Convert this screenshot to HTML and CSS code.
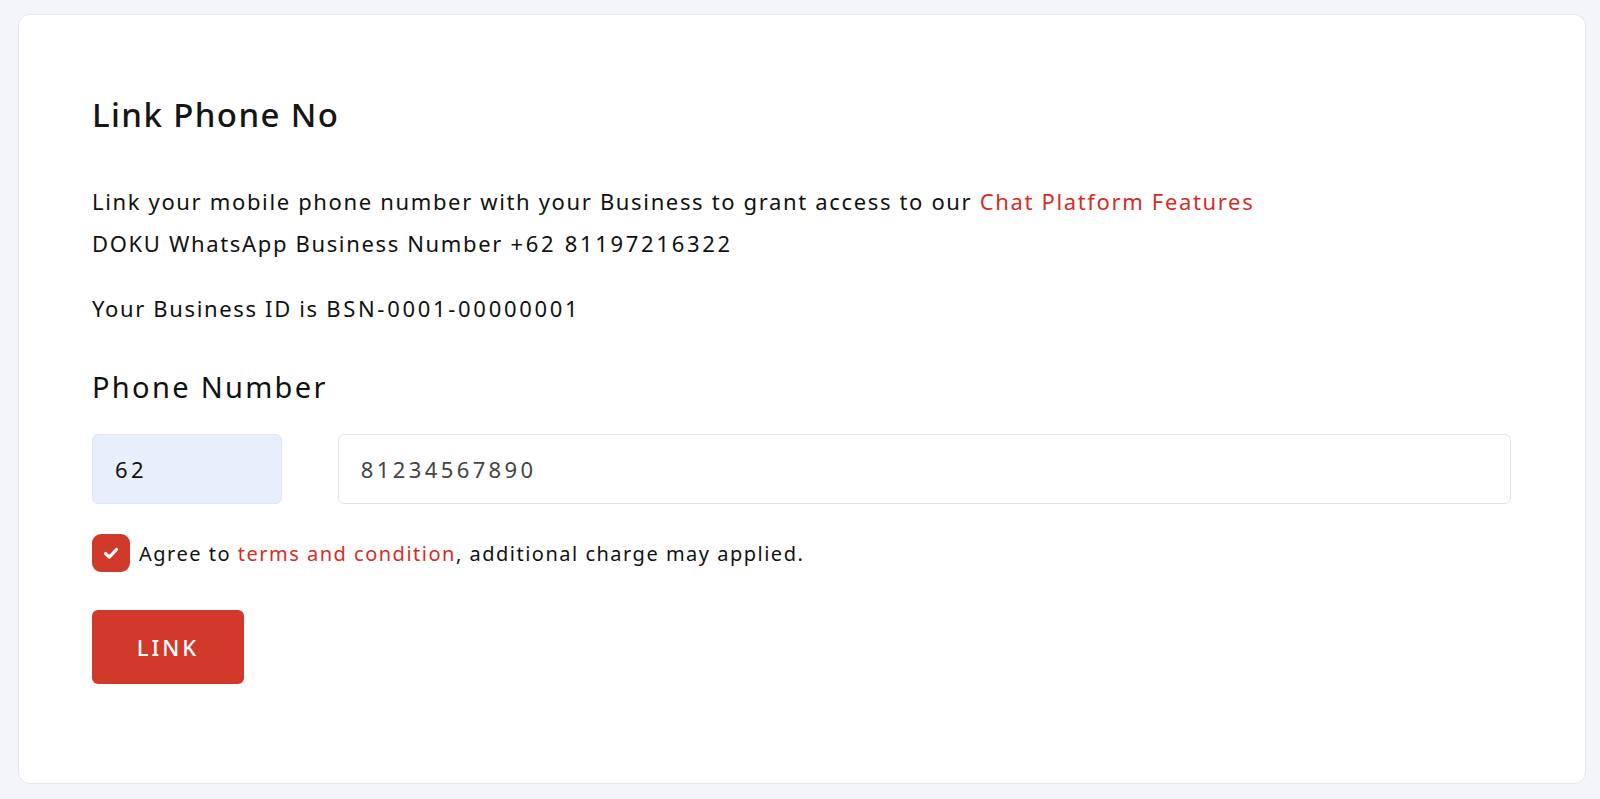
FILE: index.html
```html
<!DOCTYPE html>
<html>
<head>
<meta charset="utf-8">
<link rel="stylesheet" href="styles.css">
</head>
<body>
<div class="page">
  <div class="card">
    <h1 class="title">Link Phone No</h1>
    <p class="desc">Link your mobile phone number with your Business to grant access to our <span class="red">Chat Platform Features</span><br>DOKU WhatsApp Business Number <span class="num">+62 81197216322</span></p>
    <p class="bizid">Your Business ID is <span class="num">BSN-0001-00000001</span></p>
    <h2 class="label">Phone Number</h2>
    <div class="phone-row">
      <div class="prefix">62</div>
      <div class="number">81234567890</div>
    </div>
    <div class="agree">
      <span class="check"><svg width="22" height="22" viewBox="0 0 22 22"><path d="M5.5 11.5l3.8 3.6L16.5 7.5" fill="none" stroke="#fff" stroke-width="3.2" stroke-linecap="round" stroke-linejoin="round"/></svg></span>
      <span class="agree-text">Agree to <span class="red">terms and condition</span>, additional charge may applied.</span>
    </div>
    <button class="btn">LINK</button>
  </div>
</div>
</body>
</html>
```
FILE: styles.css
```css
html, body {
  margin: 0;
  padding: 0;
  background: #f3f5f9;
  font-family: "Noto Sans", Roboto, sans-serif;
  color: #111;
}
.page {
  padding: 14px 14px 13px 18px;
}
.card {
  background: #fff;
  border: 1px solid #e4e9f0;
  border-radius: 12px;
  height: 770px;
  box-sizing: border-box;
  padding: 80px 74px 0 73px;
}
.title {
  margin: 0;
  font-size: 33px;
  font-weight: 500;
  line-height: 40px;
  letter-spacing: 1.4px;
  color: #151515;
}
.desc {
  margin: 45px 0 0;
  font-size: 22px;
  line-height: 42px;
  letter-spacing: 1.65px;
}
.bizid {
  margin: 23px 0 0;
  font-size: 22px;
  line-height: 42px;
  letter-spacing: 1.65px;
}
.num {
  letter-spacing: 2.7px;
}
.red { color: #d82c1f; }
.label {
  margin: 38px 0 0;
  font-size: 29px;
  font-weight: 400;
  line-height: 40px;
  letter-spacing: 2.3px;
}
.phone-row {
  display: flex;
  gap: 56px;
  margin-top: 27px;
}
.prefix, .number {
  height: 70px;
  box-sizing: border-box;
  border: 1px solid #e3e6ea;
  border-radius: 6px;
  display: flex;
  align-items: center;
  font-size: 22px;
  letter-spacing: 3.4px;
  padding-left: 22px;
}
.prefix {
  width: 190px;
  background: #e8effc;
  color: #111;
}
.number {
  width: 1175px;
  background: #fff;
  color: #444;
}
.agree {
  display: flex;
  align-items: center;
  gap: 9px;
  margin-top: 30px;
}
.check {
  width: 38px;
  height: 38px;
  border-radius: 9px;
  background: #d1392b;
  display: flex;
  align-items: center;
  justify-content: center;
}
.agree-text {
  font-size: 20px;
  letter-spacing: 1.5px;
}
.btn {
  margin-top: 38px;
  width: 152px;
  height: 74px;
  border: none;
  border-radius: 6px;
  background: #d1392b;
  color: #fff;
  font-family: "Noto Sans", Roboto, sans-serif;
  font-size: 22px;
  font-weight: 500;
  letter-spacing: 3px;
  cursor: pointer;
}
```
